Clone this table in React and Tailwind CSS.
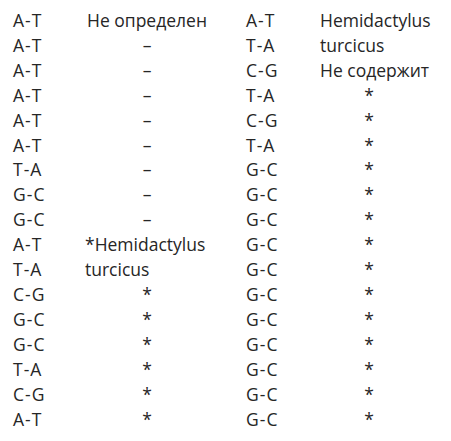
const rows = [
  ["A-T", "Не определен", "A-T", "Hemidactylus"],
  ["A-T", "–", "T-A", "turcicus"],
  ["A-T", "–", "C-G", "Не содержит"],
  ["A-T", "–", "T-A", "*"],
  ["A-T", "–", "C-G", "*"],
  ["A-T", "–", "T-A", "*"],
  ["T-A", "–", "G-C", "*"],
  ["G-C", "–", "G-C", "*"],
  ["G-C", "–", "G-C", "*"],
  ["A-T", "*Hemidactylus", "G-C", "*"],
  ["T-A", "turcicus", "G-C", "*"],
  ["C-G", "*", "G-C", "*"],
  ["G-C", "*", "G-C", "*"],
  ["G-C", "*", "G-C", "*"],
  ["T-A", "*", "G-C", "*"],
  ["C-G", "*", "G-C", "*"],
  ["A-T", "*", "G-C", "*"],
];

const short = (s) => s === "*" || s === "–" || s === "Не определен";

// splits "A-T" so the hyphen gets a little air, like the source font
function Pair({ text }) {
  const [a, b] = text.split("-");
  return (
    <span>
      {a}
      <span className="px-[1px]">-</span>
      {b}
    </span>
  );
}

export default function App() {
  return (
    <div className="min-h-[441px] w-[451px] bg-white pl-[13px] pt-[8px] text-[17.5px] leading-[24.9px] text-[#262626] [font-family:'Open_Sans','Noto_Sans',sans-serif]">
      <div className="grid grid-cols-[72px_161px_74px_98px]">
        {rows.map((r, i) => (
          <div key={i} className="contents">
            <div className="whitespace-nowrap">
              <Pair text={r[0]} />
            </div>
            <div className={`w-[124px] whitespace-nowrap ${short(r[1]) ? "text-center" : "text-left"}`}>{r[1]}</div>
            <div className="whitespace-nowrap">
              <Pair text={r[2]} />
            </div>
            <div className={`whitespace-nowrap ${r[3] === "*" ? "text-center" : "text-left"}`}>{r[3]}</div>
          </div>
        ))}
      </div>
    </div>
  );
}
